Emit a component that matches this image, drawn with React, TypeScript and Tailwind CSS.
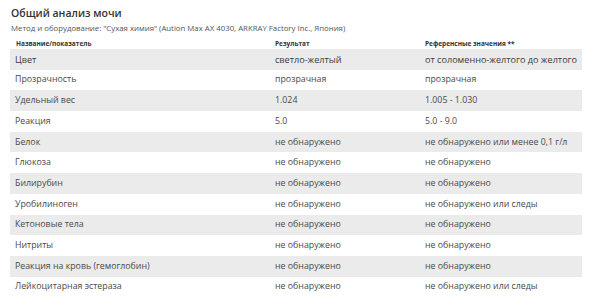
import React from "react";

const rows: [string, string, string][] = [
  ["Цвет", "светло-желтый", "от соломенно-желтого до желтого"],
  ["Прозрачность", "прозрачная", "прозрачная"],
  ["Удельный вес", "1.024", "1.005 - 1.030"],
  ["Реакция", "5.0", "5.0 - 9.0"],
  ["Белок", "не обнаружено", "не обнаружено или менее 0,1 г/л"],
  ["Глюкоза", "не обнаружено", "не обнаружено"],
  ["Билирубин", "не обнаружено", "не обнаружено"],
  ["Уробилиноген", "не обнаружено", "не обнаружено или следы"],
  ["Кетоновые тела", "не обнаружено", "не обнаружено"],
  ["Нитриты", "не обнаружено", "не обнаружено"],
  ["Реакция на кровь (гемоглобин)", "не обнаружено", "не обнаружено"],
  ["Лейкоцитарная эстераза", "не обнаружено", "не обнаружено или следы"],
];

export default function App() {
  return (
    <div
      className="w-[589px] h-[303px] bg-white text-[#4a4a4a] overflow-hidden"
      style={{ fontFamily: '"Open Sans", sans-serif' }}
    >
      <div className="pl-[10px] pr-[7px] pt-[6px]">
        <div className="pl-[1px] text-[10.5px] leading-[14px] font-semibold text-[#333]">
          Общий анализ мочи
        </div>
        <div className="pl-[1px] mt-[3px] text-[7.8px] leading-[10px] text-[#555]">
          Метод и оборудование: "Сухая химия" (Aution Max AX 4030, ARKRAY Factory Inc., Япония)
        </div>
        <div className="mt-[6px] flex h-[10px] items-center text-[6.5px] font-bold text-[#333]">
          <div className="w-[260px] pl-[6px]">Название/показатель</div>
          <div className="w-[150px] pl-[5px]">Результат</div>
          <div className="flex-1 pl-[5px]">Референсные значения **</div>
        </div>
        <div>
          {rows.map((r, i) => (
            <div
              key={i}
              className={
                "flex h-[20.7px] items-center " +
                (i % 2 === 0 ? "bg-[#ebebeb] " : "") +
                (i === 0 ? "text-[9.1px] text-[#3a3a3a]" : "text-[8.8px]")
              }
            >
              <div className="w-[260px] pl-[5px]">{r[0]}</div>
              <div className="w-[150px] pl-[5px]">{r[1]}</div>
              <div className="flex-1 pl-[5px]">{r[2]}</div>
            </div>
          ))}
        </div>
      </div>
    </div>
  );
}
